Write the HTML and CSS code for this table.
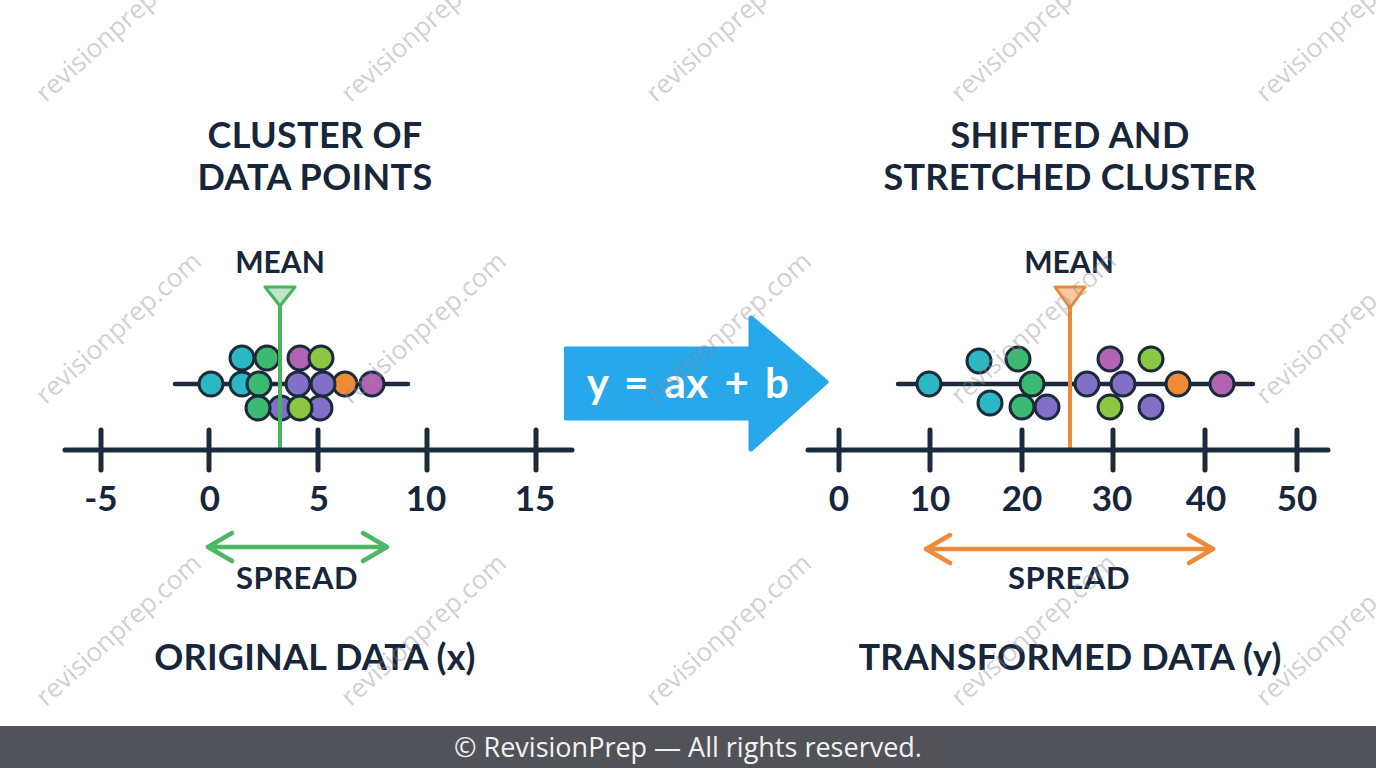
FILE: index.html
```html
<!DOCTYPE html>
<html lang="en">
<head>
<meta charset="utf-8">
<title>Linear transformation of data</title>
<link rel="stylesheet" href="styles.css">
</head>
<body>
<div class="page">
  <main class="stage">
    <section class="panel panel-left">
      <h2 class="title">CLUSTER OF<br>DATA POINTS</h2>
      <svg class="chart" width="530" height="406" viewBox="50 230 530 406" aria-label="Original data number line">
        <text class="lbl" x="280" y="273">MEAN</text>
        <polygon class="tri tri-green" points="265,287 295,287 280,306"/>
        <line class="ink rod" x1="175" y1="384" x2="408" y2="384"/>
        <circle class="dot teal" cx="242" cy="358" r="12"/>
        <circle class="dot green" cx="267" cy="358" r="12"/>
        <circle class="dot magenta" cx="300" cy="358" r="12"/>
        <circle class="dot lime" cx="321" cy="358" r="12"/>
        <circle class="dot teal" cx="211" cy="384" r="12"/>
        <circle class="dot teal" cx="242" cy="384" r="12"/>
        <circle class="dot orange" cx="345" cy="384" r="12"/>
        <circle class="dot purple" cx="298" cy="384" r="12"/>
        <circle class="dot purple" cx="323" cy="384" r="12"/>
        <circle class="dot magenta" cx="372" cy="384" r="12"/>
        <circle class="dot green" cx="259" cy="384" r="12"/>
        <circle class="dot purple" cx="281" cy="408" r="12"/>
        <circle class="dot purple" cx="320" cy="408" r="12"/>
        <circle class="dot green" cx="258" cy="408" r="12"/>
        <circle class="dot lime" cx="300" cy="408" r="12"/>
        <line class="mean mean-green" x1="280" y1="305" x2="280" y2="449"/>
        <line class="ink" x1="65" y1="450" x2="572" y2="450"/>
        <path class="ink" d="M101 430V470M209 430V470M318 430V470M427 430V470M536 430V470"/>
        <text class="num" x="101" y="511">-5</text>
        <text class="num" x="210" y="511">0</text>
        <text class="num" x="319" y="511">5</text>
        <text class="num" x="426" y="511">10</text>
        <text class="num" x="535" y="511">15</text>
        <path class="spread spread-green" d="M209 547H386M232 533L208 547L232 561M363 533L387 547L363 561"/>
        <text class="lbl lbl-wide" x="297" y="589">SPREAD</text>
      </svg>
      <p class="caption">ORIGINAL DATA (x)</p>
    </section>

    <div class="transform">
      <svg width="266" height="143" viewBox="564 312 266 143" aria-label="Transformation arrow">
        <path class="arrow" d="M566 349H751V318L826 382L751 449V418H566Z"/>
        <text class="formula" x="688" y="398">y = ax + b</text>
      </svg>
    </div>

    <section class="panel panel-right">
      <h2 class="title">SHIFTED AND<br>STRETCHED CLUSTER</h2>
      <svg class="chart" width="540" height="406" viewBox="800 230 540 406" aria-label="Transformed data number line">
        <text class="lbl" x="1069" y="273">MEAN</text>
        <polygon class="tri tri-orange" points="1055,287 1085,287 1070,308"/>
        <line class="ink rod" x1="898" y1="384" x2="1253" y2="384"/>
        <circle class="dot teal" cx="979" cy="361" r="12"/>
        <circle class="dot green" cx="1018" cy="359" r="12"/>
        <circle class="dot magenta" cx="1110" cy="359" r="12"/>
        <circle class="dot lime" cx="1151" cy="359" r="12"/>
        <circle class="dot teal" cx="929" cy="384" r="12"/>
        <circle class="dot green" cx="1032" cy="384" r="12"/>
        <circle class="dot purple" cx="1087" cy="384" r="12"/>
        <circle class="dot purple" cx="1123" cy="384" r="12"/>
        <circle class="dot orange" cx="1178" cy="384" r="12"/>
        <circle class="dot magenta" cx="1222" cy="384" r="12"/>
        <circle class="dot teal" cx="990" cy="403" r="12"/>
        <circle class="dot green" cx="1022" cy="407" r="12"/>
        <circle class="dot purple" cx="1047" cy="407" r="12"/>
        <circle class="dot lime" cx="1110" cy="407" r="12"/>
        <circle class="dot purple" cx="1151" cy="407" r="12"/>
        <line class="mean mean-orange" x1="1070" y1="307" x2="1070" y2="449"/>
        <line class="ink" x1="808" y1="450" x2="1328" y2="450"/>
        <path class="ink" d="M839 430V470M930 430V470M1022 430V470M1113 430V470M1205 430V470M1297 430V470"/>
        <text class="num" x="839" y="511">0</text>
        <text class="num" x="930" y="511">10</text>
        <text class="num" x="1022" y="511">20</text>
        <text class="num" x="1112" y="511">30</text>
        <text class="num" x="1206" y="511">40</text>
        <text class="num" x="1297" y="511">50</text>
        <path class="spread spread-orange" d="M927 549H1212M950 535L926 549L950 563M1189 535L1213 549L1189 563"/>
        <text class="lbl lbl-wide" x="1069" y="589">SPREAD</text>
      </svg>
      <p class="caption">TRANSFORMED DATA (y)</p>
    </section>
  </main>

  <footer class="footer">© RevisionPrep — All rights reserved.</footer>

  <div class="watermarks" aria-hidden="true">
    <span class="wm">revisionprep.com</span><span class="wm">revisionprep.com</span><span class="wm">revisionprep.com</span><span class="wm">revisionprep.com</span><span class="wm">revisionprep.com</span>
    <span class="wm">revisionprep.com</span><span class="wm">revisionprep.com</span><span class="wm">revisionprep.com</span><span class="wm">revisionprep.com</span><span class="wm">revisionprep.com</span>
    <span class="wm">revisionprep.com</span><span class="wm">revisionprep.com</span><span class="wm">revisionprep.com</span><span class="wm">revisionprep.com</span><span class="wm">revisionprep.com</span>
  </div>
</div>
</body>
</html>
```

FILE: styles.css
```css
html, body {
  margin: 0;
  padding: 0;
  background: #ffffff;
}

.page {
  position: relative;
  width: 1376px;
  height: 768px;
  overflow: hidden;
  background: #ffffff;
  font-family: Lato, "Noto Sans", "Liberation Sans", sans-serif;
  color: #17263a;
}

.stage {
  display: flex;
  align-items: flex-start;
  height: 726px;
  box-sizing: border-box;
  padding: 113px 0 0 50px;
}

.panel {
  display: flex;
  flex-direction: column;
  align-items: center;
}

.panel-left {
  width: 530px;
}

.panel-right {
  width: 540px;
  margin-left: -30px;
}

.transform {
  width: 266px;
  height: 143px;
  margin-left: -16px;
  margin-top: 199px;
}

.transform svg {
  display: block;
}

.title {
  margin: 0;
  font-size: 36px;
  line-height: 42px;
  font-weight: 700;
  text-align: center;
  color: #17263a;
  letter-spacing: 0.3px;
}

.chart {
  display: block;
  margin-top: 33px;
}

.caption {
  margin: 0;
  font-size: 36px;
  line-height: 40px;
  font-weight: 700;
  text-align: center;
  color: #17263a;
  letter-spacing: 0.2px;
}

/* chart drawing */
.ink {
  fill: none;
  stroke: #1c2b3b;
  stroke-width: 5;
  stroke-linecap: round;
}

.rod {
  stroke-width: 4.5;
}

.dot {
  stroke: #1c2b3b;
  stroke-width: 3;
}

.teal { fill: #2bb7c3; }
.green { fill: #3dba72; }
.magenta { fill: #b263b1; }
.lime { fill: #8dc640; }
.purple { fill: #8270c8; }
.orange { fill: #f08b35; }

.tri {
  stroke-width: 3;
  stroke-linejoin: round;
}

.tri-green {
  fill: #bfe6c6;
  stroke: #46b35d;
}

.tri-orange {
  fill: #f8c8a0;
  stroke: #ef8935;
}

.mean {
  stroke-width: 4;
}

.mean-green { stroke: #49b45e; }
.mean-orange { stroke: #ef8935; }

.spread {
  fill: none;
  stroke-width: 4.5;
  stroke-linecap: round;
  stroke-linejoin: round;
}

.spread-green { stroke: #4cb862; }
.spread-orange { stroke: #ef8a38; }

.lbl {
  font-family: Lato, "Noto Sans", sans-serif;
  font-size: 30px;
  font-weight: 700;
  fill: #17263a;
  text-anchor: middle;
}

.lbl-wide {
  font-size: 31px;
  letter-spacing: 0.5px;
}

.num {
  font-family: Lato, "Noto Sans", sans-serif;
  font-size: 35px;
  font-weight: 700;
  fill: #17263a;
  text-anchor: middle;
}

.arrow {
  fill: #27a8eb;
  stroke: #27a8eb;
  stroke-width: 5;
  stroke-linejoin: round;
}

.formula {
  font-family: Lato, "Noto Sans", sans-serif;
  font-size: 42px;
  font-weight: 700;
  fill: #ffffff;
  text-anchor: middle;
  word-spacing: 5px;
  letter-spacing: 0.5px;
}

/* footer */
.footer {
  height: 42px;
  background: #515359;
  color: #f2f2f2;
  font-family: "Open Sans", "Noto Sans", sans-serif;
  font-size: 27px;
  line-height: 42px;
  text-align: center;
}

/* watermark overlay */
.watermarks {
  position: absolute;
  left: -35px;
  top: -126px;
  display: grid;
  grid-template-columns: repeat(5, 305px);
  grid-template-rows: repeat(3, 302px);
  place-items: center;
  pointer-events: none;
}

.wm {
  display: block;
  white-space: nowrap;
  font-family: "Open Sans", "Noto Sans", sans-serif;
  font-size: 26px;
  color: rgba(140, 140, 150, 0.42);
  transform: rotate(-42deg);
}
```
